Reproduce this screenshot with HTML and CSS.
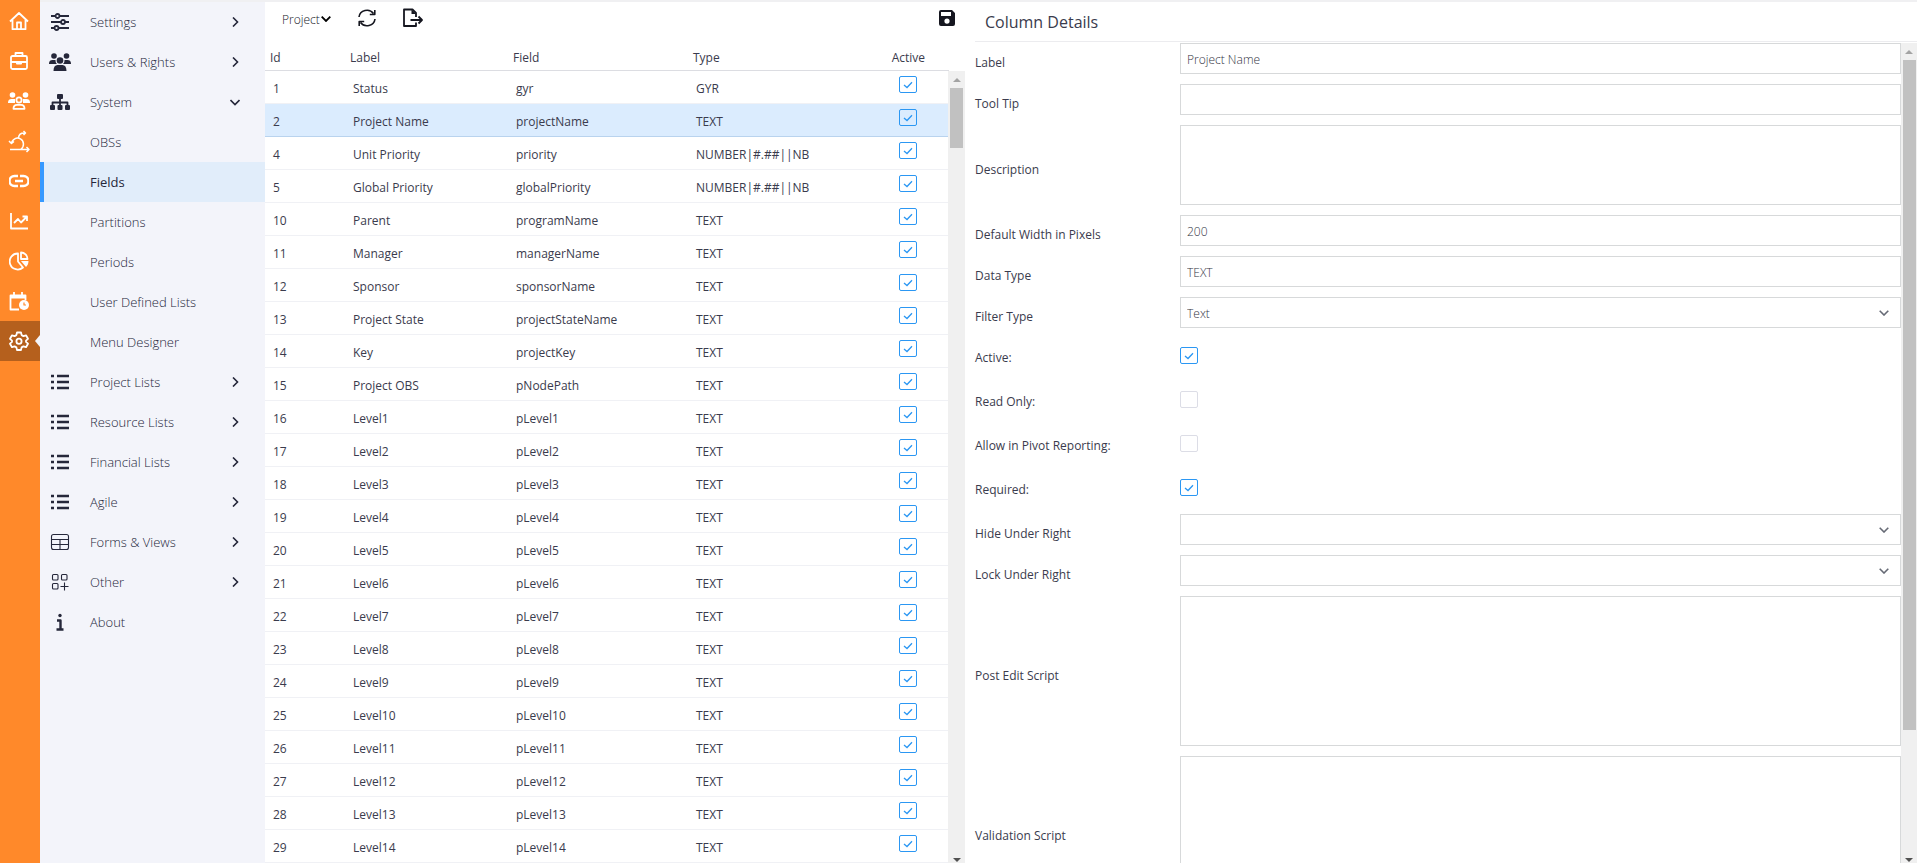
FILE: index.html
```html
<!DOCTYPE html>
<html lang="en">
<head>
  <meta charset="UTF-8" />
  <meta name="viewport" content="width=device-width, initial-scale=1.0"/>
  <title>Fields</title>
  <link rel="stylesheet" href="styles.css">
</head>
<body>

  <nav class="rail">
    <a href="#" aria-label="Home"><svg class="icon" viewBox="0 0 20 20"><path d="M1 10.500 10 2l9 8.500M3.500 9v9.200h13V9M8 18v-6.500h4V18"/></svg></a>
    <a href="#" aria-label="Portfolio"><svg class="icon" viewBox="0 0 20 20"><rect x="2" y="5" width="16" height="13" rx="1.500"/><path d="M6.500 5V2h7v3M2 11h5m6 0h5"/><path class="solid" d="M7 10h6v2.500a1 1 0 0 1-1 1H8a1 1 0 0 1-1-1z"/></svg></a>
    <a href="#" aria-label="Resources"><svg class="icon wide" viewBox="0 0 22 20"><g class="solid"><circle cx="4.500" cy="4" r="2.800"/><circle cx="17.500" cy="4" r="2.800"/><path d="M0 11.500C0 9 1.500 8 3.500 8H7v4H0zM22 11.500C22 9 20.500 8 18.500 8H15v4h7z"/></g><circle cx="11" cy="9" r="2.600"/><path d="M5.500 17.800c0-3 1.500-4 3.500-4h4c2 0 3.500 1 3.500 4z"/></svg></a>
    <a href="#" aria-label="Agile"><svg class="icon wide agile" viewBox="0 0 22 20"><path d="M2 18.500h19M18.500 16l2.500 2.500-2.500 2.500M3.500 12.500a6 6 0 1 1 9.500 5.500M1 10l2.500 2.500L6 10.500M10.500 6.500C11 3 13.500 1.500 17.500 2M15.500 0l2 2-2 2"/></svg></a>
    <a href="#" aria-label="Links"><svg class="icon" viewBox="0 0 20 20"><path class="thick" d="M9 5H5.500a5 5 0 0 0 0 10H9m2-10h3.500a5 5 0 0 1 0 10H11M6 10h8"/></svg></a>
    <a href="#" aria-label="Reports"><svg class="icon" viewBox="0 0 20 20"><path d="M2 2v15.500h17M5 12l4-4 3 3.500L17.500 6M13.500 5.500H18V10"/></svg></a>
    <a href="#" aria-label="Dashboards"><svg class="icon" viewBox="0 0 20 20"><path d="M9 2.500a8 8 0 1 0 5 14L9 10.500zM12 1.500V8h6.500C18.500 4.500 15.500 1.500 12 1.500z"/><path class="solid" d="M12 10h7.500c0 2.500-1 4.500-2.500 6z"/></svg></a>
    <a href="#" aria-label="Timesheets"><svg class="icon" viewBox="0 0 20 20"><path d="M10 18.500H1.500v-14h15V9M5 1v4m8-4v4"/><path class="solid" d="M1 4h16v3.500H1z"/><circle class="solid" cx="15" cy="14" r="5"/><path class="cut" d="M15 11.500V14h2"/></svg></a>
    <a href="#" class="current" aria-label="Administration"><svg class="icon" viewBox="0 0 20 20"><path d="M8 1.500h4l.6 2.600 1.800 1 2.600-.8 2 3.500-2 1.800v1.300l2 1.800-2 3.500-2.600-.8-1.800 1-.6 2.600H8l-.6-2.600-1.800-1-2.600.8-2-3.500 2-1.800V9.600L1 7.800l2-3.500 2.600.8 1.800-1z"/><circle cx="10" cy="10.200" r="2.600"/></svg></a>
  </nav>

  <nav class="menu">
    <a href="#"><svg class="icon" viewBox="0 0 20 20"><path d="M1 4h4.500m4 0H19M1 10h10m4 0h4M1 16h3.500m4 0H19"/><circle cx="7.500" cy="4" r="2"/><circle cx="13" cy="10" r="2"/><circle cx="6.500" cy="16" r="2"/></svg><span>Settings</span><svg class="arrow" viewBox="0 0 10 10"><path d="m3 .5 4.500 4.500L3 9.500"/></svg></a>
    <a href="#"><svg class="icon wide" viewBox="0 0 22 20"><g class="solid"><circle cx="5" cy="4" r="2.800"/><circle cx="17.500" cy="4" r="2.800"/><circle cx="11" cy="8.500" r="3.300"/><path d="M0 11.500C0 9 1.500 8 3.500 8h3C6.500 10 7 11 8 12H0zM22 11.500C22 9 20.500 8 18.500 8h-3c0 2-.5 3-1.500 4h8zM4.500 19c0-4 1.500-6 4-6h5c2.500 0 4 2 4 6z"/></g></svg><span>Users &amp; Rights</span><svg class="arrow" viewBox="0 0 10 10"><path d="m3 .5 4.500 4.500L3 9.500"/></svg></a>
    <a href="#"><svg class="icon wide" viewBox="0 0 22 20"><path d="M11 6v9M3.500 15v-4.500h15V15"/><g class="solid"><rect x="8" y="2" width="6" height="5" rx="1"/><rect x="1" y="13" width="5" height="5" rx="1"/><rect x="8.500" y="13" width="5" height="5" rx="1"/><rect x="16" y="13" width="5" height="5" rx="1"/></g></svg><span>System</span><svg class="arrow" viewBox="0 0 10 10"><path d="M.5 3 5 7.500 9.500 3"/></svg></a>
    <a href="#" class="sub">OBSs</a>
    <a href="#" class="sub selected">Fields</a>
    <a href="#" class="sub">Partitions</a>
    <a href="#" class="sub">Periods</a>
    <a href="#" class="sub">User Defined Lists</a>
    <a href="#" class="sub">Menu Designer</a>
    <a href="#"><svg class="icon" viewBox="0 0 20 20"><path class="thick" d="M1 4h3m3 0h12M1 10h3m3 0h12M1 16h3m3 0h12"/></svg><span>Project Lists</span><svg class="arrow" viewBox="0 0 10 10"><path d="m3 .5 4.500 4.500L3 9.500"/></svg></a>
    <a href="#"><svg class="icon" viewBox="0 0 20 20"><path class="thick" d="M1 4h3m3 0h12M1 10h3m3 0h12M1 16h3m3 0h12"/></svg><span>Resource Lists</span><svg class="arrow" viewBox="0 0 10 10"><path d="m3 .5 4.500 4.500L3 9.500"/></svg></a>
    <a href="#"><svg class="icon" viewBox="0 0 20 20"><path class="thick" d="M1 4h3m3 0h12M1 10h3m3 0h12M1 16h3m3 0h12"/></svg><span>Financial Lists</span><svg class="arrow" viewBox="0 0 10 10"><path d="m3 .5 4.500 4.500L3 9.500"/></svg></a>
    <a href="#"><svg class="icon" viewBox="0 0 20 20"><path class="thick" d="M1 4h3m3 0h12M1 10h3m3 0h12M1 16h3m3 0h12"/></svg><span>Agile</span><svg class="arrow" viewBox="0 0 10 10"><path d="m3 .5 4.500 4.500L3 9.500"/></svg></a>
    <a href="#"><svg class="icon thin" viewBox="0 0 20 20"><rect x="1.500" y="2.500" width="17" height="15" rx="2"/><path d="M1.500 7.500h17m-17 5h17m-8.500-5v10"/></svg><span>Forms &amp; Views</span><svg class="arrow" viewBox="0 0 10 10"><path d="m3 .5 4.500 4.500L3 9.500"/></svg></a>
    <a href="#"><svg class="icon thin" viewBox="0 0 20 20"><rect x="2.500" y="2.500" width="5.500" height="5.500" rx="1"/><rect x="11.500" y="2.500" width="5.500" height="5.500" rx="1"/><rect x="2.500" y="11.500" width="5.500" height="5.500" rx="1"/><path d="M14.500 10.500v8m-4-4h8"/></svg><span>Other</span><svg class="arrow" viewBox="0 0 10 10"><path d="m3 .5 4.500 4.500L3 9.500"/></svg></a>
    <a href="#"><svg class="icon" viewBox="0 0 20 20"><circle class="solid" cx="10" cy="3.500" r="1.700"/><path class="thick" d="M7 8.500h3.500V17M6.500 17.500h7"/></svg><span>About</span></a>
  </nav>

  <section class="list">
    <div class="toolbar">
      <select class="entity" aria-label="Entity">
        <option>Project</option>
      </select>
      <button type="button" aria-label="Refresh"><svg class="icon refresh" viewBox="0 0 20 20"><path d="M2 9a8 7.500 0 0 1 14.500-3.500M17.800 2v4.500h-5M18 11a8 7.500 0 0 1-14.500 3.500M2.200 18v-4.500h5"/></svg></button>
      <button type="button" aria-label="Export"><svg class="icon wide" viewBox="0 0 22 20"><path d="M14 14.500V18H2V1.500h8.500L14 5v4M8.500 12H20m-3.500-3.500L20 12l-3.500 3.500"/><path class="solid" d="M9.500 1.500V6H14z"/></svg></button>
      <button type="button" class="save" aria-label="Save"><svg class="icon" viewBox="0 0 20 20"><path class="solid" fill-rule="evenodd" d="M4 2h11l3 3v11a2 2 0 0 1-2 2H4a2 2 0 0 1-2-2V4a2 2 0 0 1 2-2zm0 2v4h10V4zm6 6.500a2.600 2.600 0 1 0 0 5.200 2.600 2.600 0 0 0 0-5.200z"/></svg></button>
    </div>
    <div class="grid">
      <table>
        <thead>
          <tr>
            <th class="col-id">Id</th>
            <th class="col-label">Label</th>
            <th class="col-field">Field</th>
            <th class="col-type">Type</th>
            <th class="col-active">Active</th>
          </tr>
        </thead>
        <tbody id="rows"></tbody>
      </table>
      <div class="scrollbar"><i class="up"></i><i class="thumb"></i><i class="down"></i></div>
    </div>
  </section>

  <section class="details">
    <h2>Column Details</h2>
    <div class="pane">
      <form>
        <div class="row"><label for="label">Label</label><input type="text" id="label" value="Project Name"></div>
        <div class="row"><label for="tip">Tool Tip</label><input type="text" id="tip"></div>
        <div class="row"><label for="desc">Description</label><textarea id="desc"></textarea></div>
        <div class="row"><label for="width">Default Width in Pixels</label><input type="text" id="width" value="200"></div>
        <div class="row"><label for="dataType">Data Type</label><input type="text" id="dataType" value="TEXT"></div>
        <div class="row"><label for="filter">Filter Type</label><select id="filter"><option>Text</option></select></div>
        <div class="row tick"><label for="active">Active:</label><input type="checkbox" id="active" checked></div>
        <div class="row tick"><label for="readOnly">Read Only:</label><input type="checkbox" id="readOnly"></div>
        <div class="row tick"><label for="pivot">Allow in Pivot Reporting:</label><input type="checkbox" id="pivot"></div>
        <div class="row tick"><label for="required">Required:</label><input type="checkbox" id="required" checked></div>
        <div class="row"><label for="hide">Hide Under Right</label><select id="hide"><option></option></select></div>
        <div class="row"><label for="lock">Lock Under Right</label><select id="lock"><option></option></select></div>
        <div class="row"><label for="postEdit">Post Edit Script</label><textarea id="postEdit" class="script"></textarea></div>
        <div class="row"><label for="validation">Validation Script</label><textarea id="validation" class="script"></textarea></div>
      </form>
      <div class="scrollbar long"><i class="up"></i><i class="thumb"></i><i class="down"></i></div>
    </div>
  </section>

  <script src="script.js"></script>
</body>
</html>
```

FILE: styles.css
```css
* {
  box-sizing: border-box;
}

body {
  margin: 0;
  height: 100vh;
  overflow: hidden;
  display: flex;
  font-family: 'Open Sans', 'Noto Sans', sans-serif;
  font-size: 12px;
  color: #3a3b4d;
  background: #fff;
}

a {
  color: inherit;
  text-decoration: none;
}

.icon {
  width: 20px;
  height: 20px;
  flex: none;
  fill: none;
  stroke: currentColor;
  stroke-width: 1.8;
  stroke-linejoin: round;
}

.icon.wide {
  width: 22px;
}

.icon.thin {
  stroke-width: 1.1;
}

.icon.refresh {
  stroke-width: 1.6;
}

.icon.agile {
  stroke-width: 1.5;
  overflow: visible;
}

.icon .thick {
  stroke-width: 2.4;
}

.icon .solid {
  fill: currentColor;
  stroke: none;
}

.icon .cut {
  stroke: #ff892a;
  stroke-width: 1.2;
}

/* orange icon rail */
.rail {
  width: 40px;
  flex: none;
  padding-top: 1px;
  background: #ff892a;
  color: #fff;
}

.rail a {
  position: relative;
  height: 40px;
  display: flex;
  align-items: center;
  justify-content: center;
  padding-right: 2px;
}

.rail .current {
  background: #b5601d;
}

.rail .current::after {
  content: "";
  position: absolute;
  right: 0;
  top: 14px;
  border: 6px solid transparent;
  border-left: none;
  border-right: 5px solid #f3f4fa;
}

/* side menu */
.menu {
  width: 225px;
  flex: none;
  border-top: 2px solid #f0f0f2;
  background: #f3f4fa;
  font-size: 13px;
  font-weight: 300;
  color: #25273a;
}

.menu a {
  height: 40px;
  display: flex;
  align-items: center;
  padding: 0 25px 0 9px;
}

.menu .icon {
  width: 22px;
  margin-right: 19px;
}

.menu .icon:not(.wide) {
  padding: 0 1px;
}

.menu .sub {
  padding-left: 50px;
}

.menu .selected {
  background: #e1edfa;
  border-left: 4px solid #3699ff;
  padding-left: 46px;
  font-weight: 400;
}

.arrow {
  width: 10px;
  height: 10px;
  margin-left: auto;
  fill: none;
  stroke: currentColor;
  stroke-width: 1.6;
}

/* field list */
.list {
  width: 700px;
  flex: none;
  display: flex;
  flex-direction: column;
  border-top: 2px solid #f0f0f2;
}

.toolbar {
  height: 34px;
  display: flex;
  align-items: center;
  padding: 0 8px 0 17px;
  flex: none;
  color: #15161f;
}

.toolbar .entity {
  width: 49px;
  height: 20px;
  margin: 0 26px 0 0;
  padding: 1px 0 0;
  border: none;
  font-size: 12px;
  background-position: right center;
  color: inherit;
}

button {
  padding: 0 0 2px;
  margin-right: 25px;
  border: none;
  background: none;
  color: inherit;
  display: flex;
}

.toolbar .save {
  margin: 0 0 0 auto;
}

.grid {
  position: relative;
  flex: 1;
  min-height: 0;
}

table {
  width: calc(100% - 16px);
  border-collapse: separate;
  border-spacing: 0;
  table-layout: fixed;
}

th {
  height: 35px;
  padding: 9px 5px 0;
  text-align: left;
  font-weight: 500;
  border-bottom: 1px solid #dcdde2;
}

td {
  height: 33px;
  padding: 2px 8px 0;
  border-bottom: 1px solid #f0f1f5;
}

td:last-child {
  padding: 0 32px 6px;
  text-align: right;
}

td input {
  display: inline-block;
  vertical-align: middle;
}

tr.active td {
  background: #dbecfe;
  border-bottom-color: #b9d3ee;
}

.col-id { width: 80px; }
.col-label { width: 163px; }
.col-field { width: 180px; }
.col-type { width: 150px; }
.col-active { padding-right: 24px; text-align: right; }

/* scrollbars */
.scrollbar {
  position: absolute;
  top: 35px;
  right: 0;
  bottom: -4px;
  width: 17px;
  padding: 7px 2px 5px;
  background: #f0f0f0;
  display: flex;
  flex-direction: column;
}

.scrollbar.long {
  top: 1px;
  width: 16px;
}

.scrollbar .up,
.scrollbar .down {
  align-self: center;
  border: 4px solid transparent;
}

.scrollbar .up {
  border-top: none;
  border-bottom-color: #a3a3a3;
}

.scrollbar .down {
  margin-top: auto;
  border-bottom: none;
  border-top-color: #505050;
}

.scrollbar .thumb {
  height: 60px;
  margin-top: 6px;
  background: #c1c1c1;
}

.scrollbar.long .thumb {
  height: calc(82% + 4px);
  margin-right: -1px;
}

/* details form */
.details {
  flex: 1;
  min-width: 0;
  display: flex;
  flex-direction: column;
  border-top: 2px solid #f0f0f2;
  padding-left: 10px;
}

h2 {
  margin: 0;
  height: 40px;
  padding: 0 10px;
  border-bottom: 1px solid #ececef;
  font-size: 16px;
  font-weight: 500;
  line-height: 40px;
}

.pane {
  position: relative;
  flex: 1;
  min-height: 0;
  padding: 1px 16px 0 0;
}

.row {
  display: grid;
  grid-template-columns: 205px 1fr;
  align-items: center;
}

label {
  padding-bottom: 2px;
  font-weight: 500;
}

input[type=text],
textarea,
select {
  width: 100%;
  height: 31px;
  margin: 0 0 10px;
  padding: 1px 6px 0;
  border: 1px solid #d7d9da;
  border-radius: 0;
  background: #fff;
  font-family: inherit;
  font-size: 12px;
  font-weight: 300;
  color: #33343f;
}

textarea {
  height: 80px;
  display: block;
  resize: none;
}

textarea.script {
  height: 150px;
}

select {
  appearance: none;
  background: url("data:image/svg+xml,%3Csvg xmlns='http://www.w3.org/2000/svg' width='10' height='6'%3E%3Cpath d='M.7.7 5 5 9.300.7' fill='none' stroke='%23666a75' stroke-width='1.600'/%3E%3C/svg%3E") no-repeat right 11px center;
}

.toolbar select {
  background-image: url("data:image/svg+xml,%3Csvg xmlns='http://www.w3.org/2000/svg' width='10' height='6'%3E%3Cpath d='M.7.7 5 5 9.300.7' fill='none' stroke='%23000' stroke-width='1.800'/%3E%3C/svg%3E");
}

input[type=checkbox] {
  appearance: none;
  width: 18px;
  height: 17px;
  margin: 0;
  border: 1px solid #dcdde6;
  border-radius: 2px;
}

input[type=checkbox]:checked {
  border-color: #2b97f3;
  background: url("data:image/svg+xml,%3Csvg xmlns='http://www.w3.org/2000/svg' width='10' height='8'%3E%3Cpath d='M1 4l3 2.500L9 1.200' fill='none' stroke='%232b97f3' stroke-width='1.300'/%3E%3C/svg%3E") no-repeat center;
}

.tick {
  height: 44px;
}

.tick label {
  padding-bottom: 5px;
}

.tick input[type=checkbox] {
  margin-bottom: 9px;
}
```

FILE: script.js
```js
const fields = [
  [1, 'Status', 'gyr', 'GYR'],
  [2, 'Project Name', 'projectName', 'TEXT'],
  [4, 'Unit Priority', 'priority', 'NUMBER|#.##||NB'],
  [5, 'Global Priority', 'globalPriority', 'NUMBER|#.##||NB'],
  [10, 'Parent', 'programName', 'TEXT'],
  [11, 'Manager', 'managerName', 'TEXT'],
  [12, 'Sponsor', 'sponsorName', 'TEXT'],
  [13, 'Project State', 'projectStateName', 'TEXT'],
  [14, 'Key', 'projectKey', 'TEXT'],
  [15, 'Project OBS', 'pNodePath', 'TEXT']
];

// Level1 .. Level14 follow the fixed columns
for (let i = 1; i <= 14; i++) {
  fields.push([15 + i, 'Level' + i, 'pLevel' + i, 'TEXT']);
}

const selectedId = 2;

document.getElementById('rows').innerHTML = fields.map(([id, label, field, type]) => `
  <tr class="${id === selectedId ? 'active' : ''}">
    <td>${id}</td>
    <td>${label}</td>
    <td>${field}</td>
    <td>${type}</td>
    <td><input type="checkbox" aria-label="${label} active" checked></td>
  </tr>`).join('');
```
